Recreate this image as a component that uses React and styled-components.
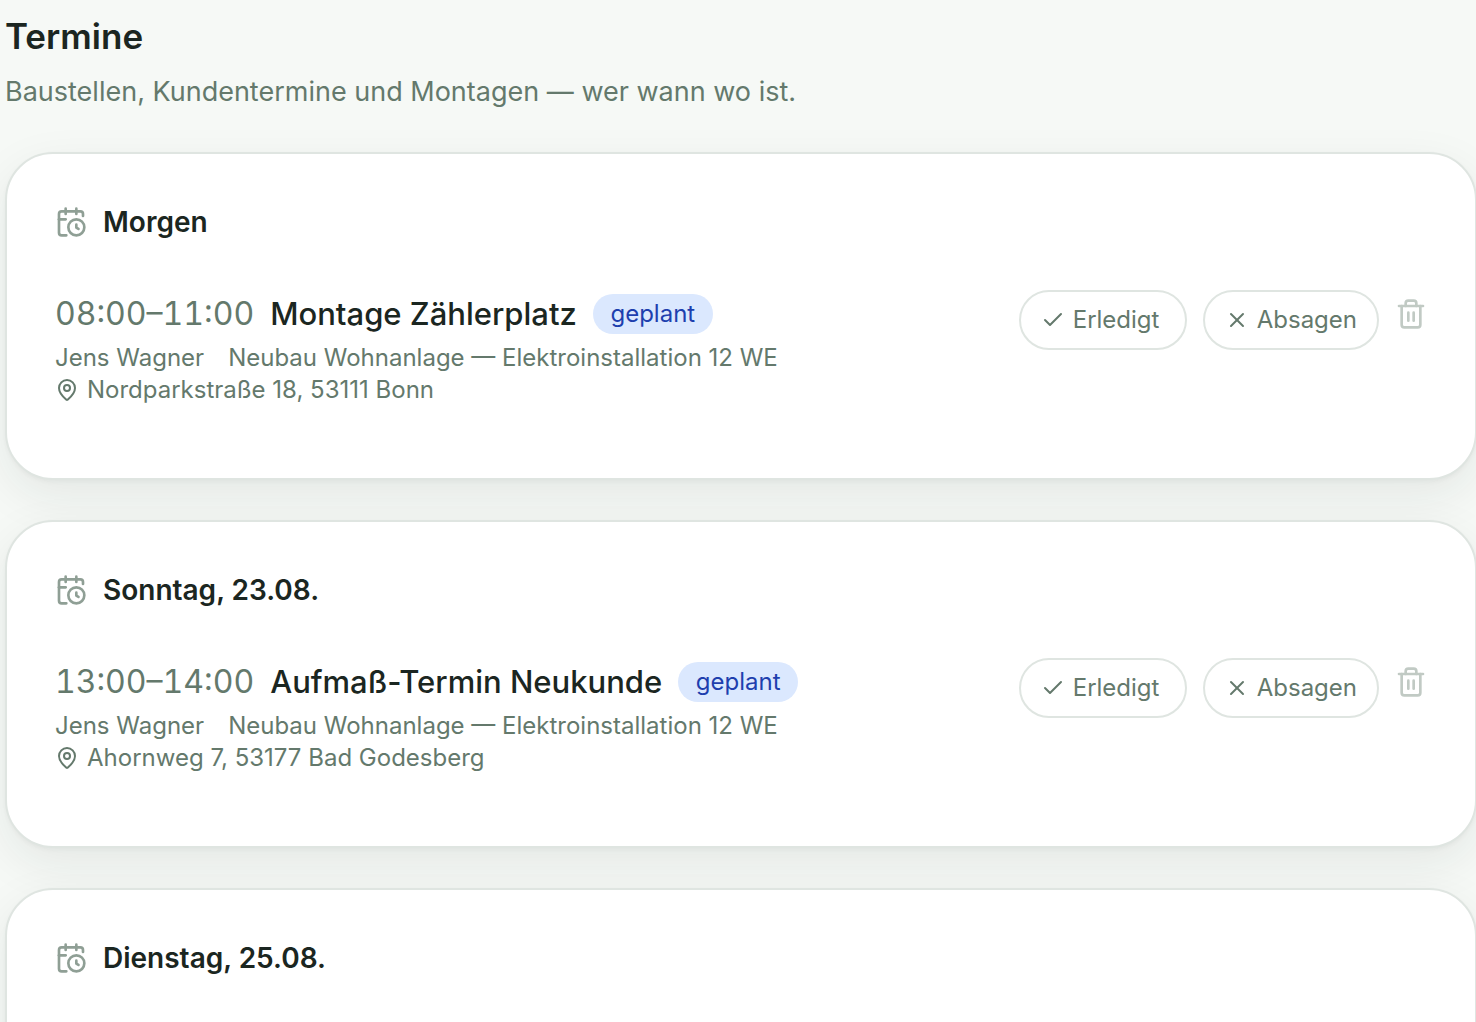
import React from 'react';
import styled, { createGlobalStyle } from 'styled-components';
import { CalendarClock, Check, MapPin, Trash2, X } from 'lucide-react';

const GlobalStyle = createGlobalStyle`
    * {
        box-sizing: border-box;
    }
    body {
        margin: 0;
        background-color: #f6f9f6;
        color: #1b2621;
        font-family: Inter, "Liberation Sans", sans-serif;
        overflow-x: hidden;
    }
`
const Page = styled.main`
    display: flex;
    flex-direction: column;
    gap: 40px;
    margin-right: -1px;
    padding: 12px 0 40px 5px;
`
// Page heading
const PageHeader = styled.header`
    display: flex;
    flex-direction: column;
    gap: 12px;
`
const PageTitle = styled.h1`
    margin: 0;
    font-size: 35px;
    line-height: 48px;
    font-weight: 600;
`
const PageText = styled.p`
    margin: 0;
    color: #64796c;
    font-size: 27px;
    line-height: 40px;
`
// Card for one day
const DayCard = styled.section`
    min-height: 328px;
    padding: 48px;
    border: 2px solid #dfe5e1;
    border-radius: 48px;
    background-color: #fff;
    box-shadow: 0 2px 4px rgba(27, 38, 33, .04), 0 16px 48px rgba(27, 38, 33, .08);
`
const DayHeader = styled.div`
    display: flex;
    align-items: center;
    gap: 16px;
    margin-bottom: 24px;
    color: #8f9f95;
`
const DayTitle = styled.h2`
    margin: 0;
    color: #1b2621;
    font-size: 28px;
    line-height: 40px;
    font-weight: 600;
`
const List = styled.ul`
    margin: 0;
    padding: 0;
    list-style: none;
`
const Item = styled.li`
    display: flex;
    align-items: flex-start;
    justify-content: space-between;
    gap: 24px;
    padding: 24px 0;
`
// Appointment data
const Heading = styled.div`
    display: flex;
    align-items: center;
    gap: 16px;
    margin-bottom: 4px;
    line-height: 48px;
`
const Time = styled.time`
    color: #64796c;
    font-size: 32px;
    font-variant-numeric: tabular-nums;
`
const Name = styled.span`
    font-size: 31px;
    font-weight: 500;
`
const Badge = styled.span`
    min-width: 120px;
    padding: 4px 16px;
    border-radius: 20px;
    background-color: #dbe8fe;
    color: #1e3fae;
    font-size: 24px;
    line-height: 32px;
    text-align: center;
`
const Meta = styled.div`
    display: flex;
    align-items: center;
    gap: ${props => props.$gap};
    color: #64796c;
    font-size: 24px;
    line-height: 32px;
`
// Buttons
const Actions = styled.div`
    display: flex;
    align-items: flex-start;
    flex-shrink: 0;
    gap: 16px;
`
const PillButton = styled.button`
    display: flex;
    align-items: center;
    gap: 8px;
    min-width: 168px;
    padding: 12px 20px;
    border: 2px solid #dfe5e1;
    border-radius: 30px;
    background-color: #fff;
    color: #64796c;
    font-family: inherit;
    font-size: 24px;
    line-height: 32px;
    cursor: pointer;
`
const IconButton = styled.button`
    display: flex;
    padding: 8px 0;
    border: none;
    background: none;
    color: #c1cac4;
    cursor: pointer;
`

const days = [
    {
        title: 'Morgen',
        items: [{
            time: '08:00–11:00',
            name: 'Montage Zählerplatz',
            status: 'geplant',
            person: 'Jens Wagner',
            project: 'Neubau Wohnanlage — Elektroinstallation 12 WE',
            place: 'Nordparkstraße 18, 53111 Bonn',
        }],
    },
    {
        title: 'Sonntag, 23.08.',
        items: [{
            time: '13:00–14:00',
            name: 'Aufmaß-Termin Neukunde',
            status: 'geplant',
            person: 'Jens Wagner',
            project: 'Neubau Wohnanlage — Elektroinstallation 12 WE',
            place: 'Ahornweg 7, 53177 Bad Godesberg',
        }],
    },
    { title: 'Dienstag, 25.08.', items: [] },
];

const Appointment = (props) => (
    <Item>
        <div>
            <Heading>
                <Time>{props.time}</Time>
                <Name>{props.name}</Name>
                <Badge>{props.status}</Badge>
            </Heading>
            <Meta $gap='24px'>
                <span>{props.person}</span>
                <span>{props.project}</span>
            </Meta>
            <Meta $gap='8px'>
                <MapPin size={24} strokeWidth={2} />
                <span>{props.place}</span>
            </Meta>
        </div>
        <Actions>
            <PillButton type='button'><Check size={24} strokeWidth={2} />Erledigt</PillButton>
            <PillButton type='button'><X size={24} strokeWidth={2} />Absagen</PillButton>
            <IconButton type='button' aria-label='Löschen'><Trash2 size={32} strokeWidth={2} /></IconButton>
        </Actions>
    </Item>
)

const App = () => (
    <React.Fragment>
        <GlobalStyle />
        <Page>
            <PageHeader>
                <PageTitle>Termine</PageTitle>
                <PageText>Baustellen, Kundentermine und Montagen — wer wann wo ist.</PageText>
            </PageHeader>
            {days.map(day => (
                <DayCard key={day.title}>
                    <DayHeader>
                        <CalendarClock size={32} strokeWidth={2} />
                        <DayTitle>{day.title}</DayTitle>
                    </DayHeader>
                    <List>
                        {day.items.map(item => <Appointment key={item.time} {...item} />)}
                    </List>
                </DayCard>
            ))}
        </Page>
    </React.Fragment>
)

export default App;
